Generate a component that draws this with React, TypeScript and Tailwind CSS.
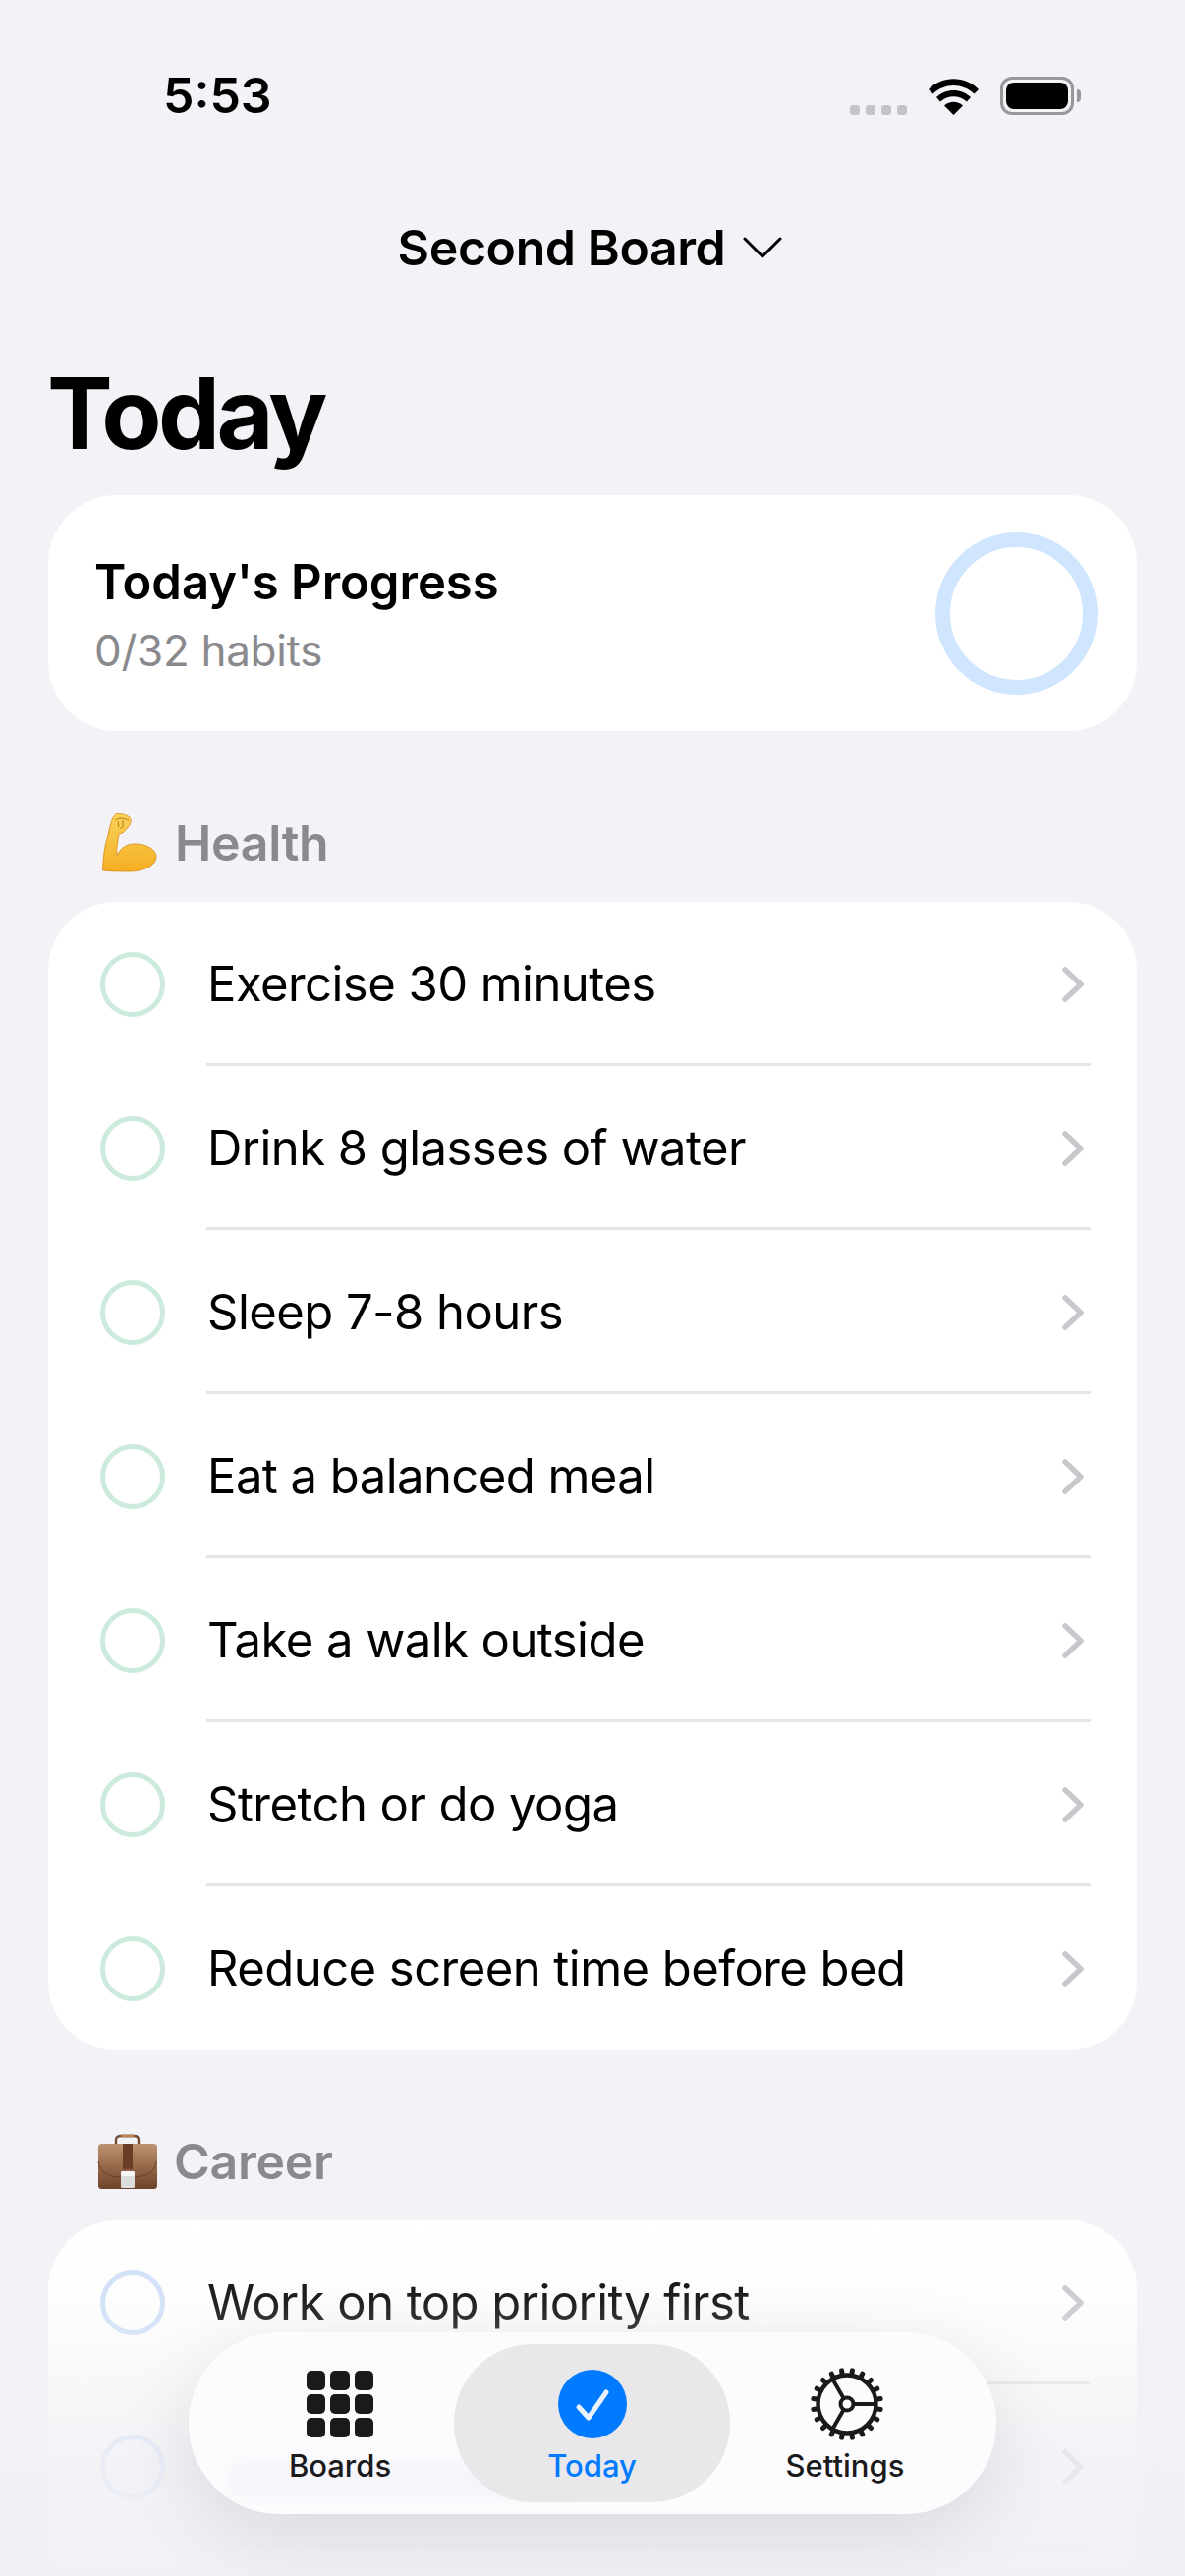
import React from "react";

const healthHabits = [
  "Exercise 30 minutes",
  "Drink 8 glasses of water",
  "Sleep 7-8 hours",
  "Eat a balanced meal",
  "Take a walk outside",
  "Stretch or do yoga",
  "Reduce screen time before bed",
];

const RowChevron = () => (
  <svg viewBox="0 0 22 36" className="w-[22px] h-[36px] shrink-0" fill="none">
    <path d="M3 3 L19 18 L3 33" stroke="#c7c7cc" strokeWidth="5.5" strokeLinecap="round" strokeLinejoin="round" />
  </svg>
);

const HabitRow = ({ label, ringClass, last }: { label?: string; ringClass: string; last?: boolean }) => (
  <div className="flex h-[167px] items-center pl-[53px] pr-[54px] relative">
    <div className={`w-[66px] h-[66px] rounded-full border-[5px] shrink-0 ${ringClass}`} />
    <span className="ml-[43px] flex-1 text-[49px] tracking-[-0.55px] leading-none text-black">{label}</span>
    <RowChevron />
    {!last && <div className="absolute bottom-0 left-[161px] right-[47px] h-[3px] bg-[#e5e5e7]" />}
  </div>
);

const BicepsEmoji = () => (
  <svg viewBox="0 0 56 60" className="w-[56px] h-[60px] shrink-0">
    <defs>
      <linearGradient id="arm" x1="0" y1="0" x2="0" y2="1">
        <stop offset="0" stopColor="#fbd45c" />
        <stop offset="1" stopColor="#f5ae22" />
      </linearGradient>
    </defs>
    <path
      d="M14 0.5 C20 0 28 2 29 6 C30 10 27 14 21 20 L17 21 C16 28 14 36 15 43 C18 36 24 31 33 31 C46 31 55 37 55 44 C55 53 42 59 28 59 C18 59 8 59 0.5 58 C1 46 2 34 6 22 C8 14 9 5 14 0.5 Z"
      fill="url(#arm)"
      stroke="#d8890f"
      strokeWidth="0.8"
    />
    <path d="M13 7 C17 4 23 5 27 7 M16 8 L17 14 M21 7 L21 12 C22 14 20 15 18 15" fill="none" stroke="#b9770f" strokeWidth="1" />
  </svg>
);

const BriefcaseEmoji = () => (
  <svg viewBox="0 0 61 56" className="w-[61px] h-[56px] shrink-0">
    <defs>
      <linearGradient id="leather" x1="0" y1="0" x2="0" y2="1">
        <stop offset="0" stopColor="#bd9473" />
        <stop offset="0.5" stopColor="#96694a" />
        <stop offset="1" stopColor="#6c4228" />
      </linearGradient>
    </defs>
    <path d="M19 10 V6 C19 3 21 2 24 2 H37 C40 2 42 3 42 6 V10" fill="none" stroke="#6f4d34" strokeWidth="2.4" />
    <path d="M24 2 H37" stroke="#b98558" strokeWidth="3" />
    <rect x="1" y="10" width="60" height="46" rx="3.5" fill="url(#leather)" />
    <path d="M1 28 C2 38 10 44 24 44 H38 C50 44 59 38 60 28" fill="none" stroke="#5f3a23" strokeWidth="0.8" />
    <rect x="26" y="10" width="10" height="26" fill="#683e25" />
    <rect x="24" y="42" width="14" height="13" rx="1.5" fill="#dcdcdc" />
    <rect x="24" y="38" width="14" height="5" rx="1" fill="#f5f5f5" />
  </svg>
);

const WifiIcon = () => (
  <svg viewBox="0 0 51 37" className="w-[51px] h-[37px]">
    <path d="M25.5 37 L16 27.5 C21.5 22.5 29.5 22.5 35 27.5 Z" fill="#000" />
    <path d="M12 23.5 L8 19 C17.5 9.5 33.5 9.5 43 19 L39 23.5 C31 16.5 20 16.5 12 23.5 Z" fill="#000" />
    <path d="M4.5 15.5 L0 11 C13.5 -3.5 37.5 -3.5 51 11 L46.5 15.5 C34.5 4 16.5 4 4.5 15.5 Z" fill="#000" />
  </svg>
);

const GearIcon = () => {
  const teeth = Array.from({ length: 20 }, (_, i) => (i * 360) / 20 + 9);
  return (
    <svg viewBox="0 0 76 76" className="w-[76px] h-[76px]" fill="none">
      {teeth.map((deg) => (
        <rect key={deg} x="35.5" y="1" width="5" height="9" rx="2" fill="#1a1a1c" transform={`rotate(${deg} 38 38)`} />
      ))}
      <circle cx="38" cy="38" r="29.5" stroke="#1a1a1c" strokeWidth="4.4" />
      <circle cx="38" cy="38" r="6.5" stroke="#1a1a1c" strokeWidth="4" />
      <path d="M45 38 H67 M34.5 32 L23 12 M34.5 44 L23 64" stroke="#1a1a1c" strokeWidth="4" />
    </svg>
  );
};

const BoardsIcon = () => (
  <div className="grid grid-cols-3 gap-x-[5px] gap-y-[4px] w-[69px]">
    {Array.from({ length: 9 }, (_, i) => (
      <div key={i} className="h-[20px] rounded-[5px] bg-[#1a1a1c]" />
    ))}
  </div>
);

const TodayIcon = () => (
  <div className="w-[70px] h-[70px] rounded-full bg-[#007aff]">
    <svg viewBox="0 0 70 70" className="w-[70px] h-[70px]" fill="none">
      <path d="M21 38 L31 49 L49 23" stroke="#e9f2fd" strokeWidth="5" strokeLinecap="round" strokeLinejoin="round" />
    </svg>
  </div>
);

export default function App() {
  return (
    <div className="relative w-[1206px] h-[2622px] overflow-hidden bg-[#f2f2f7] font-['Inter',sans-serif]">
      {/* status bar */}
      <div className="flex items-center justify-between h-[196px] pl-[166px] pr-[106px] pb-[2px]">
        <span className="text-[50px] font-semibold leading-none text-black">5:53</span>
        <div className="flex items-end gap-[22px]">
          <div className="flex gap-[6px]">
            {[0, 1, 2, 3].map((d) => (
              <div key={d} className="w-[10px] h-[10px] rounded-[3px] bg-[#c4c4c7]" />
            ))}
          </div>
          <WifiIcon />
          <div className="flex items-center">
            <div className="w-[75px] h-[39px] rounded-[12px] border-[3px] border-[#98989b] p-[3px]">
              <div className="w-full h-full rounded-[8px] bg-black" />
            </div>
            <div className="w-[4px] h-[13px] rounded-r-full bg-[#98989b] ml-[3px]" />
          </div>
        </div>
      </div>

      {/* board switcher */}
      <div className="flex items-center justify-center h-[112px] gap-[18px] pr-[5px]">
        <span className="text-[50px] font-semibold tracking-[-0.4px] leading-none text-black">Second Board</span>
        <svg viewBox="0 0 40 22" className="w-[40px] h-[22px]" fill="none">
          <path d="M2 2 L20 20 L38 2" stroke="#000" strokeWidth="3" strokeLinecap="round" strokeLinejoin="round" />
        </svg>
      </div>

      <h1 className="ml-[48px] mt-[58px] text-[100px] font-bold tracking-[-3.6px] leading-[110px] text-black">Today</h1>

      <div className="mx-[49px] mt-[28px]">
        <div className="flex items-center justify-between h-[240px] rounded-[70px] bg-white pl-[47px] pr-[40px]">
          <div className="pt-[2px]">
            <div className="text-[49px] font-semibold leading-[60px] text-black">Today's Progress</div>
            <div className="text-[44px] tracking-[-0.3px] leading-[52px] mt-[13px] text-[#8a8a8e]">0/32 habits</div>
          </div>
          <div className="w-[165px] h-[165px] rounded-full border-[15px] border-[#cfe6fe]" />
        </div>

        <div className="flex items-center h-[60px] mt-[84px] pl-[55px] gap-[18px]">
          <BicepsEmoji />
          <span className="text-[50px] font-semibold tracking-[-0.3px] leading-none text-[#8a8a8e]">Health</span>
        </div>
        <div className="mt-[30px] rounded-[70px] bg-white">
          {healthHabits.map((h, i) => (
            <HabitRow key={h} label={h} ringClass="border-[#cdebdd]" last={i === healthHabits.length - 1} />
          ))}
        </div>

        <div className="flex items-center h-[60px] mt-[83px] pl-[50px] gap-[17px]">
          <BriefcaseEmoji />
          <span className="text-[50px] font-semibold tracking-[-0.3px] leading-none text-[#8a8a8e]">Career</span>
        </div>
        <div className="mt-[30px] rounded-[70px] bg-white pb-[60px]">
          <HabitRow label="Work on top priority first" ringClass="border-[#cfe0f8]" />
          <HabitRow ringClass="border-[#cfe0f8]" />
        </div>
      </div>

      {/* fade under the tab bar */}
      <div className="absolute inset-x-0 bottom-0 h-[362px] bg-[linear-gradient(to_bottom,rgba(240,240,245,0)_0%,rgba(240,240,245,0.14)_23%,rgba(240,240,245,0.8)_69%,rgba(240,240,245,0.97)_100%)]" />

      {/* tab bar */}
      <div className="absolute left-[192px] top-[2374px] w-[822px] h-[185px] rounded-[92px] bg-[#fcfcfe] shadow-[0_20px_80px_rgba(0,0,0,0.10)] flex items-center px-[12px] overflow-hidden">
        <div className="absolute left-[40px] top-[130px] w-[350px] h-[40px] rounded-[12px] bg-[#f6f6fa] blur-[6px]" />
        <div className="relative flex flex-col items-center w-[258px] pl-[26px]">
          <div className="h-[76px] flex items-center"><BoardsIcon /></div>
          <span className="text-[31px] font-medium leading-none mt-[9px] text-[#1a1a1c]">Boards</span>
        </div>
        <div className="relative flex flex-col items-center justify-center w-[281px] h-[161px] rounded-[80px] bg-[#e8e8ea]">
          <div className="h-[76px] flex items-center"><TodayIcon /></div>
          <span className="text-[31px] font-medium leading-none mt-[9px] text-[#007aff]">Today</span>
        </div>
        <div className="relative flex flex-col items-center w-[238px]">
          <div className="h-[76px] flex items-center"><GearIcon /></div>
          <span className="text-[31px] font-medium leading-none mt-[9px] pr-[4px] text-[#1a1a1c]">Settings</span>
        </div>
      </div>
    </div>
  );
}
